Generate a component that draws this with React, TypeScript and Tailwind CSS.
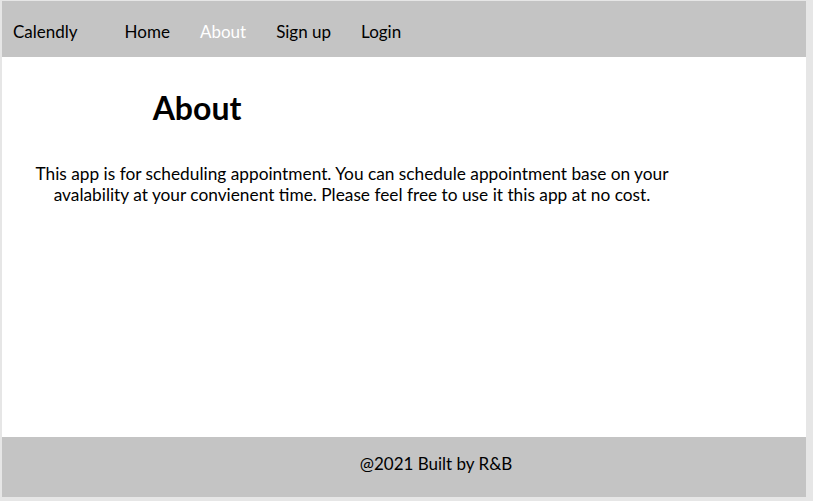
export default function App() {
  const links = ["Home", "About", "Sign up", "Login"];
  return (
    <div className="flex h-[501px] w-[813px] flex-col bg-[#e6e6e6] pb-[4px] pl-[2px] pr-[7px] pt-px text-black" style={{ fontFamily: "Lato, 'Open Sans', sans-serif" }}>
      {/* Navbar */}
      <nav className="flex h-[56px] items-center bg-[#c4c4c4] pl-[11px] pt-[5px] text-[17px]">
        <span>Calendly</span>
        <ul className="ml-[47px] flex gap-[30px]">
          {links.map((l) => (
            <li key={l} className={l === "About" ? "text-white" : ""}>{l}</li>
          ))}
        </ul>
      </nav>

      {/* Content */}
      <main className="flex-1 bg-white">
        <div className="flex">
          <h1 className="w-[390px] pt-[27px] text-center text-[32px] font-bold">About</h1>
        </div>
        <p className="mt-[31px] w-[700px] text-center text-[17.3px] leading-[21px]">
          This app is for scheduling appointment. You can schedule appointment base on your avalability at your convienent time. Please feel free to use it this app at no cost.
        </p>
      </main>

      {/* Footer */}
      <footer className="flex h-[60px] items-center justify-center bg-[#c4c4c4] pb-[6px] pl-[64px] text-[17px]">
        @2021 Built by R&amp;B
      </footer>
    </div>
  );
}
